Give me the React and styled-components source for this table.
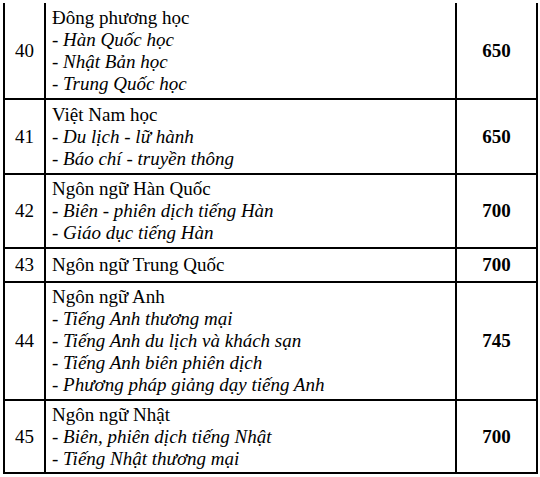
import React from 'react';
import styled, { createGlobalStyle } from 'styled-components';

const GlobalStyle = createGlobalStyle`
  html, body {
    margin: 0;
    padding: 0;
    background: #ffffff;
  }
  body {
    font-family: "Liberation Serif", "DejaVu Serif", serif;
    color: #000000;
  }
`;

const LINE = '#000000';

const Page = styled.div`
  width: 540px;
  height: 477px;
  padding: 3px 0 0 3px;
  box-sizing: border-box;
  overflow: hidden;
`;

const Table = styled.table`
  border-collapse: separate;
  border-spacing: 0;
  border-left: 2px solid ${LINE};
  table-layout: fixed;
  width: 535px;
  font-family: "Liberation Serif", "DejaVu Serif", serif;
`;

const Row = styled.tr`
  height: ${p => p.h}px;
`;

const Cell = styled.td`
  box-sizing: border-box;
  padding: 0;
  border-right: 2px solid ${LINE};
  border-bottom: 2px solid ${LINE};
  vertical-align: middle;
  font-family: "Liberation Serif", "DejaVu Serif", serif;
  font-size: 19px;
  line-height: 22px;
  color: #000000;
`;

const NumCell = styled(Cell)`
  width: 41px;
  text-align: center;
`;

const NameCell = styled(Cell)`
  width: 411px;
  padding-left: 6px;
`;

const ScoreCell = styled(Cell)`
  width: 81px;
  text-align: center;
  font-weight: bold;
`;

const Title = styled.div`
  white-space: nowrap;
`;

const Sub = styled.div`
  font-style: italic;
  white-space: nowrap;
`;

const majors = [
  {
    no: 40,
    name: 'Đông phương học',
    subs: ['Hàn Quốc học', 'Nhật Bản học', 'Trung Quốc học'],
    score: 650,
    h: 97
  },
  {
    no: 41,
    name: 'Việt Nam học',
    subs: ['Du lịch - lữ hành', 'Báo chí - truyền thông'],
    score: 650,
    h: 75
  },
  {
    no: 42,
    name: 'Ngôn ngữ Hàn Quốc',
    subs: ['Biên - phiên dịch tiếng Hàn', 'Giáo dục tiếng Hàn'],
    score: 700,
    h: 74
  },
  {
    no: 43,
    name: 'Ngôn ngữ Trung Quốc',
    subs: [],
    score: 700,
    h: 34
  },
  {
    no: 44,
    name: 'Ngôn ngữ Anh',
    subs: [
      'Tiếng Anh thương mại',
      'Tiếng Anh du lịch và khách sạn',
      'Tiếng Anh biên phiên dịch',
      'Phương pháp giảng dạy tiếng Anh'
    ],
    score: 745,
    h: 118
  },
  {
    no: 45,
    name: 'Ngôn ngữ Nhật',
    subs: ['Biên, phiên dịch tiếng Nhật', 'Tiếng Nhật thương mại'],
    score: 700,
    h: 73
  }
];

const MajorRow = ({ major }) => (
  <Row h={major.h}>
    <NumCell>{major.no}</NumCell>
    <NameCell>
      <Title>{major.name}</Title>
      {major.subs.map(s => (
        <Sub key={s}>- {s}</Sub>
      ))}
    </NameCell>
    <ScoreCell>{major.score}</ScoreCell>
  </Row>
);

export default function App() {
  return (
    <Page>
      <GlobalStyle />
      <Table>
        <tbody>
          {majors.map(m => (
            <MajorRow key={m.no} major={m} />
          ))}
        </tbody>
      </Table>
    </Page>
  );
}
